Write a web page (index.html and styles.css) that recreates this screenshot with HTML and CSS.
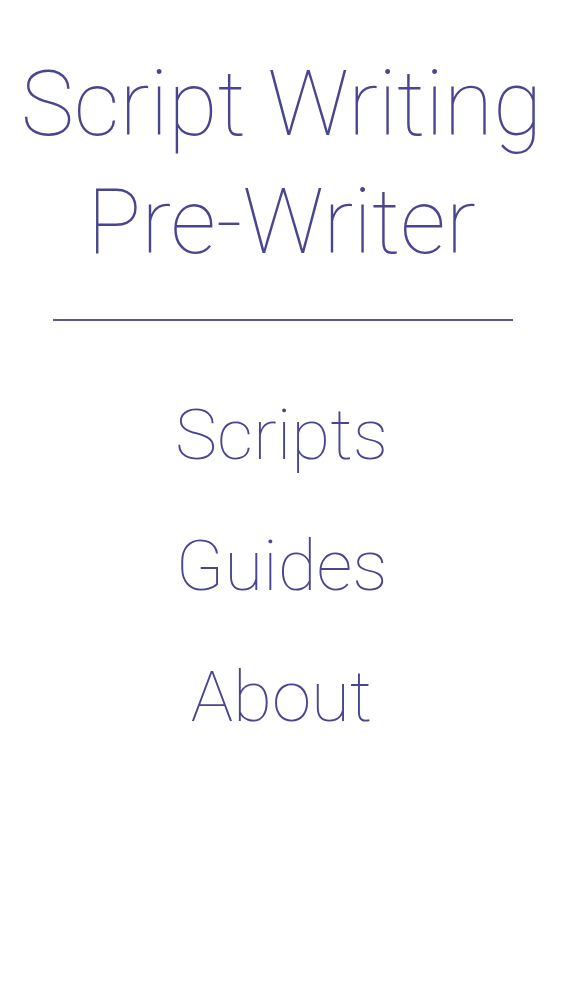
FILE: index.html
```html
<!DOCTYPE html>
<html>
<head>
<meta charset="utf-8">
<link rel="stylesheet" href="styles.css">
</head>
<body>
<div class="page">
  <h1 class="title">Script Writing<br>Pre-Writer</h1>
  <hr class="rule">
  <nav class="menu">
    <a class="item">Scripts</a>
    <a class="item">Guides</a>
    <a class="item">About</a>
  </nav>
</div>
</body>
</html>
```
FILE: styles.css
```css
html, body { margin: 0; padding: 0; background: #fff; }
.page {
  font-family: Roboto, "Noto Sans", sans-serif;
  font-weight: 100;
  color: #4a4590;
  display: flex;
  flex-direction: column;
  align-items: center;
  padding-top: 46px;
}
.title {
  margin: 0;
  font-weight: 100;
  font-size: 90px;
  line-height: 118px;
  text-align: center;
}
.rule {
  width: 460px;
  height: 2px;
  border: 0;
  background: #5a5694;
  margin: 37px 0 0 3px;
}
.menu {
  display: flex;
  flex-direction: column;
  align-items: center;
  margin-top: 48px;
}
.item {
  font-size: 71px;
  line-height: 131px;
}
```
